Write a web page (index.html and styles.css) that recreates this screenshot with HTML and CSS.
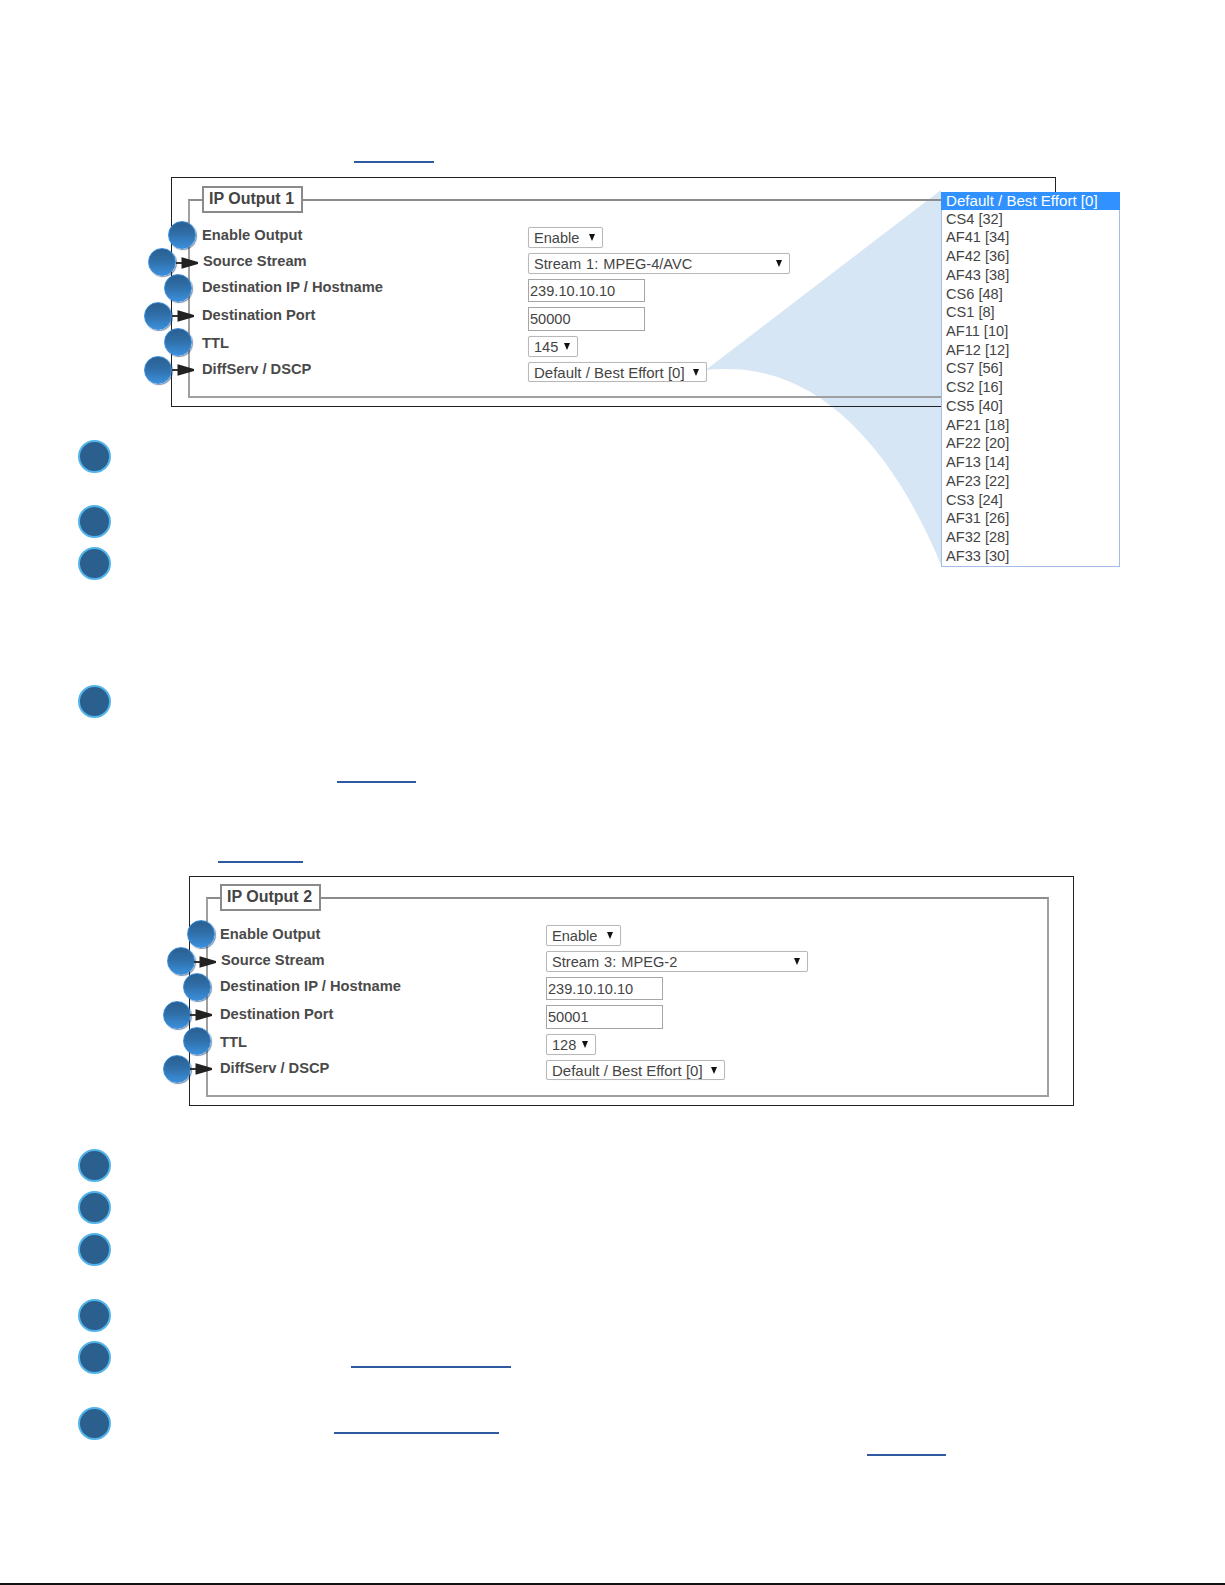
FILE: index.html
```html
<!DOCTYPE html>
<html lang="en">
<head>
<meta charset="utf-8">
<title>IP Output</title>
<link rel="stylesheet" href="styles.css">
</head>
<body>
<main class="doc">
  <a class="link link-a" href="#" aria-label="link"></a>

  <figure class="shot shot-one">
    <svg class="wedge" viewBox="700 190 245 380" aria-hidden="true"><path d="M707 369 L941 190 L941 565 C900 465 830 369 727 369 Q715 369 707 370 Z"/></svg>
    <div class="frame">
      <fieldset class="panel">
        <legend class="panel-title">IP Output 1</legend>
        <div class="form">
          <div class="labels">
            <div class="label">Enable Output</div>
            <div class="label label-nudge">Source Stream</div>
            <div class="label">Destination IP / Hostname</div>
            <div class="label">Destination Port</div>
            <div class="label">TTL</div>
            <div class="label">DiffServ / DSCP</div>
          </div>
          <div class="controls">
            <div class="select w-enable"><span>Enable</span><i class="caret"></i></div>
            <div class="select w-stream"><span class="spaced">Stream 1: MPEG-4/AVC</span><i class="caret"></i></div>
            <div class="input h-ip">239.10.10.10</div>
            <div class="input h-port">50000</div>
            <div class="select w-ttl"><span>145</span><i class="caret"></i></div>
            <div class="select w-dscp h-dscp"><span class="wide">Default / Best Effort [0]</span><i class="caret"></i></div>
          </div>
        </div>
      </fieldset>
    </div>
    <span class="pin p1"></span><span class="pin p2"></span><span class="pin p3"></span><span class="pin p4"></span><span class="pin p5"></span><span class="pin p6"></span>
    <svg class="arrow ar-long ar2" viewBox="0 0 24 12" aria-hidden="true"><path d="M0 6H10"/><path d="M7 1L24 6L7 11Z"/></svg>
    <svg class="arrow ar-short ar4" viewBox="0 0 24 12" aria-hidden="true"><path d="M0 6H10"/><path d="M7 1L24 6L7 11Z"/></svg>
    <svg class="arrow ar-short ar6" viewBox="0 0 24 12" aria-hidden="true"><path d="M0 6H10"/><path d="M7 1L24 6L7 11Z"/></svg>
    <ul class="dropdown">
      <li class="active">Default / Best Effort [0]</li>
      <li>CS4 [32]</li><li>AF41 [34]</li><li>AF42 [36]</li><li>AF43 [38]</li><li>CS6 [48]</li><li>CS1 [8]</li><li>AF11 [10]</li><li>AF12 [12]</li><li>CS7 [56]</li><li>CS2 [16]</li><li>CS5 [40]</li><li>AF21 [18]</li><li>AF22 [20]</li><li>AF13 [14]</li><li>AF23 [22]</li><li>CS3 [24]</li><li>AF31 [26]</li><li>AF32 [28]</li><li>AF33 [30]</li>
    </ul>
  </figure>

  <div class="step s-440"><span class="dot"></span></div>
  <div class="step s-505"><span class="dot"></span></div>
  <div class="step"><span class="dot"></span></div>
  <div class="step s-685"><span class="dot"></span></div>

  <a class="link link-b" href="#" aria-label="link"></a>
  <a class="link link-c" href="#" aria-label="link"></a>

  <figure class="shot shot-two">
    <div class="frame">
      <fieldset class="panel">
        <legend class="panel-title">IP Output 2</legend>
        <div class="form">
          <div class="labels">
            <div class="label">Enable Output</div>
            <div class="label label-nudge">Source Stream</div>
            <div class="label">Destination IP / Hostname</div>
            <div class="label">Destination Port</div>
            <div class="label">TTL</div>
            <div class="label">DiffServ / DSCP</div>
          </div>
          <div class="controls">
            <div class="select w-enable"><span>Enable</span><i class="caret"></i></div>
            <div class="select w-stream"><span class="spaced">Stream 3: MPEG-2</span><i class="caret"></i></div>
            <div class="input h-ip">239.10.10.10</div>
            <div class="input h-port">50001</div>
            <div class="select w-ttl"><span>128</span><i class="caret"></i></div>
            <div class="select w-dscp h-dscp"><span class="wide">Default / Best Effort [0]</span><i class="caret"></i></div>
          </div>
        </div>
      </fieldset>
    </div>
    <span class="pin p1"></span><span class="pin p2"></span><span class="pin p3"></span><span class="pin p4"></span><span class="pin p5"></span><span class="pin p6"></span>
    <svg class="arrow ar-long ar2" viewBox="0 0 24 12" aria-hidden="true"><path d="M0 6H10"/><path d="M7 1L24 6L7 11Z"/></svg>
    <svg class="arrow ar-short ar4" viewBox="0 0 24 12" aria-hidden="true"><path d="M0 6H10"/><path d="M7 1L24 6L7 11Z"/></svg>
    <svg class="arrow ar-short ar6" viewBox="0 0 24 12" aria-hidden="true"><path d="M0 6H10"/><path d="M7 1L24 6L7 11Z"/></svg>
  </figure>

  <div class="step s-1149"><span class="dot"></span></div>
  <div class="step"><span class="dot"></span></div>
  <div class="step"><span class="dot"></span></div>
  <div class="step s-wide"><span class="dot"></span></div>
  <div class="step"><span class="dot"></span><a class="link link-d" href="#" aria-label="link"></a></div>
  <div class="step s-wide"><span class="dot"></span><a class="link link-e" href="#" aria-label="link"></a></div>

  <a class="link link-f" href="#" aria-label="link"></a>
</main>
<footer class="rule"></footer>
</body>
</html>
```
FILE: styles.css
```css
* { box-sizing: border-box; }
html, body { margin: 0; padding: 0; background: #fff; }
body {
  min-height: 1585px;
  display: flex;
  flex-direction: column;
  font-family: "Liberation Sans", Arial, sans-serif;
  color: #444;
}
.doc { display: flex; flex-direction: column; align-items: flex-start; padding-top: 161px; }
.rule { margin-top: auto; height: 2px; background: #111; }

/* Links: the text is blank in the source, only the underline shows */
.link { display: block; height: 2px; background: #2f5aa0; }
.link-a { width: 80px; margin-left: 354px; }
.link-b { width: 79px; margin: 63px 0 0 337px; }
.link-c { width: 85px; margin: 78px 0 0 218px; }
.link-d { width: 160px; margin: 25px 0 0 240px; }
.link-e { width: 165px; margin: 25px 0 0 223px; }
.link-f { width: 79px; margin: 14px 0 0 867px; }

/* Numbered steps */
.step { display: flex; align-items: flex-start; margin: 9px 0 0 78px; }
.step.s-440 { margin-top: 33px; }
.step.s-505 { margin-top: 32px; }
.step.s-685 { margin-top: 105px; }
.step.s-1149 { margin-top: 43px; }
.step.s-wide { margin-top: 33px; }
.dot {
  flex: none;
  width: 33px;
  height: 33px;
  border-radius: 50%;
  background: #2a5f8e;
  border: 2.5px solid #52b4ea;
}

/* Screenshot figures */
.shot { position: relative; margin: 14px 0 0 171px; width: 885px; height: 230px; }
.shot-two { margin: 13px 0 0 189px; }
.frame {
  position: relative;
  height: 100%;
  border: 1px solid #222;
  padding: 8px 24px 8px 16px;
}
.shot-two .frame { padding-top: 7px; }
.panel {
  margin: 0;
  padding: 0;
  height: 100%;
  min-width: 0;
  border: 2px solid #a0a0a0;
  border-top-color: #8c8c8c;
}
.panel-title {
  margin-left: 12px;
  padding: 0 7px 0 5px;
  height: 27px;
  line-height: 22px;
  border: 2px solid #8a8a8a;
  background: #fff;
  font-size: 16px;
  font-weight: 700;
  color: #444;
}
.form { display: flex; align-items: flex-start; padding: 12px 0 0 12px; }
.shot-two .form { padding-top: 13px; }
.labels { width: 326px; flex: none; }
.label { height: 20px; line-height: 20px; font-size: 14.7px; font-weight: 700; color: #4a4a4a; margin-bottom: 6px; }
.label:nth-child(3), .label:nth-child(4) { margin-bottom: 8px; }
.label-nudge { padding-left: 1px; }
.controls { display: flex; flex-direction: column; gap: 5px; margin-top: 2px; font-size: 14.6px; color: #444; }
.shot-two .controls { margin-top: 1px; }
.select {
  display: flex;
  align-items: center;
  justify-content: space-between;
  height: 21px;
  padding: 0 7px 0 5px;
  background: #fff;
  border: 1px solid #b8b8b8;
  border-radius: 2px;
  box-shadow: 0 0 1px rgba(0, 0, 0, .15);
  white-space: nowrap;
}
.spaced { word-spacing: 1px; }
.wide { font-size: 15px; }
.caret {
  width: 0;
  height: 0;
  border-left: 3.5px solid transparent;
  border-right: 3.5px solid transparent;
  border-top: 7px solid #111;
}
.w-enable { width: 75px; }
.w-stream { width: 262px; }
.w-ttl { width: 50px; }
.w-dscp { width: 179px; }
.h-dscp { height: 20px; }
.input {
  width: 117px;
  padding-left: 1px;
  background: #fff;
  border: 1px solid #a6a6a6;
  display: flex;
  align-items: center;
}
.h-ip { height: 23px; }
.h-port { height: 24px; }

/* Overlays */
.wedge { position: absolute; left: 529px; top: 13px; width: 245px; height: 380px; }
.wedge path { fill: #d7e6f4; }
.pin {
  position: absolute;
  width: 28px;
  height: 28px;
  border-radius: 50%;
  background: linear-gradient(#2a5f90 0%, #2f6ea8 45%, #3b8fdb 100%);
  border: 1px solid #3b8ddb;
  box-shadow: 1px 1px 1px rgba(20, 60, 110, .55);
}
.p1 { left: -3px; top: 44px; }
.p2 { left: -23px; top: 71px; }
.p3 { left: -7px; top: 97px; }
.p4 { left: -27px; top: 125px; }
.p5 { left: -7px; top: 151px; }
.p6 { left: -27px; top: 179px; }
.shot-two .pin { transform: translateX(1px); }
.arrow { position: absolute; height: 12px; width: 22px; }
.arrow path { fill: #222; stroke: #222; stroke-width: 2; }
.ar-long { left: 5px; top: 80px; }
.ar-short { left: 1px; }
.ar4 { top: 133px; }
.ar6 { top: 187px; }
.dropdown {
  position: absolute;
  left: 770px;
  top: 15px;
  width: 179px;
  margin: 0;
  padding: 0 0 1px;
  list-style: none;
  background: #fff;
  border: 1px solid #a3bde6;
  border-top: 0;
  font-size: 14.6px;
  color: #444;
}
.dropdown li { height: 18.72px; line-height: 18.72px; padding-left: 4px; white-space: nowrap; }
.dropdown .active { height: 17.72px; line-height: 17.72px; background: #3091ff; color: #fff; margin: 0 -1px; padding-left: 5px; font-size: 15.1px; }
```
